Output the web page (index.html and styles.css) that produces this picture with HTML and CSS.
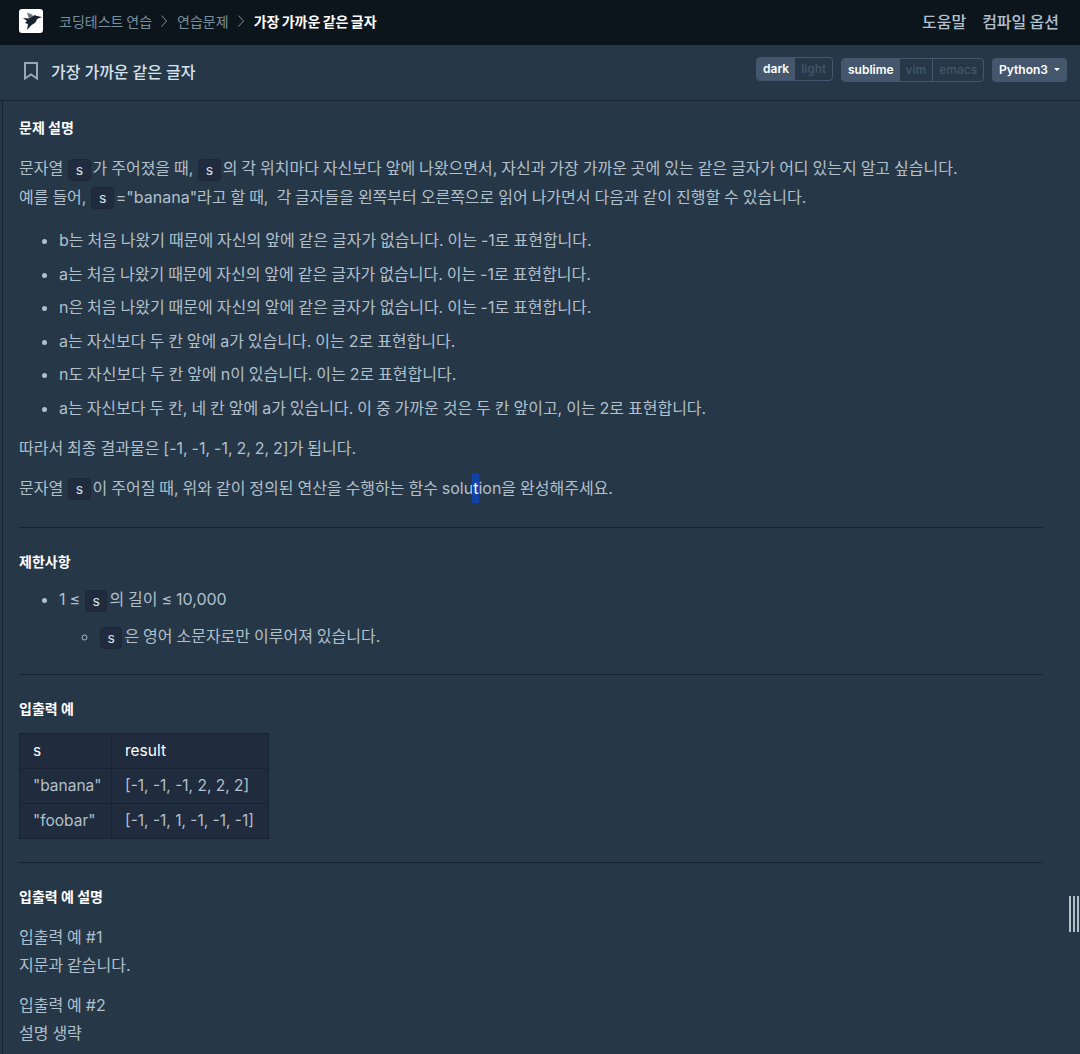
FILE: index.html
```html
<!DOCTYPE html>
<html lang="ko">
<head>
<meta charset="utf-8">
<title>가장 가까운 같은 글자</title>
<link rel="stylesheet" href="styles.css">
</head>
<body>
<nav class="nav">
  <div class="crumbs">
    <span class="logo">
      <svg viewBox="0 0 24 24" width="24" height="24"><path d="M8 3.5 L13 5.5 L15 8.5 L10 10 Z" fill="#6d7680"/><path d="M4 9 L10 9.5 L13 8 L15.5 6 L18 7 L23 8 L18 10 C17.5 13 15 15 12.5 16 L8 21 L9 15 L6 14 L8 12 Z" fill="#17232f"/></svg>
    </span>
    <a class="crumb">코딩테스트 연습</a>
    <svg class="chev" viewBox="0 0 6 12" width="6" height="12"><path d="M0.5 0.5 L5.5 6 L0.5 11.5" fill="none" stroke="#78909c" stroke-width="1"/></svg>
    <a class="crumb">연습문제</a>
    <svg class="chev" viewBox="0 0 6 12" width="6" height="12"><path d="M0.5 0.5 L5.5 6 L0.5 11.5" fill="none" stroke="#78909c" stroke-width="1"/></svg>
    <strong class="crumb-now">가장 가까운 같은 글자</strong>
  </div>
  <div class="nav-links">
    <a>도움말</a>
    <a>컴파일 옵션</a>
  </div>
</nav>
<header class="bar">
  <div class="bar-title">
    <svg viewBox="0 0 14 18" width="14" height="18"><path d="M1 1 H13 V16.5 L7 12.5 L1 16.5 Z" fill="none" stroke="#98a8b9" stroke-width="2"/></svg>
    <h1>가장 가까운 같은 글자</h1>
  </div>
  <div class="bar-tools">
    <div class="seg"><span class="on">dark</span><span class="off">light</span></div>
    <div class="seg seg-low"><span class="on">sublime</span><span class="off">vim</span><span class="off">emacs</span></div>
    <div class="lang">Python3<i class="caret"></i></div>
  </div>
</header>
<main class="guide">
  <h2 class="first">문제 설명</h2>
  <p>문자열 <code>s</code>가 주어졌을 때, <code>s</code>의 각 위치마다 자신보다 앞에 나왔으면서, 자신과 가장 가까운 곳에 있는 같은 글자가 어디 있는지 알고 싶습니다.<br>예를 들어, <code>s</code>="banana"라고 할 때,&nbsp; 각 글자들을 왼쪽부터 오른쪽으로 읽어 나가면서 다음과 같이 진행할 수 있습니다.</p>
  <ul class="steps">
    <li>b는 처음 나왔기 때문에 자신의 앞에 같은 글자가 없습니다. 이는 -1로 표현합니다.</li>
    <li>a는 처음 나왔기 때문에 자신의 앞에 같은 글자가 없습니다. 이는 -1로 표현합니다.</li>
    <li>n은 처음 나왔기 때문에 자신의 앞에 같은 글자가 없습니다. 이는 -1로 표현합니다.</li>
    <li>a는 자신보다 두 칸 앞에 a가 있습니다. 이는 2로 표현합니다.</li>
    <li>n도 자신보다 두 칸 앞에 n이 있습니다. 이는 2로 표현합니다.</li>
    <li>a는 자신보다 두 칸, 네 칸 앞에 a가 있습니다. 이 중 가까운 것은 두 칸 앞이고, 이는 2로 표현합니다.</li>
  </ul>
  <p>따라서 최종 결과물은 [-1, -1, -1, 2, 2, 2]가 됩니다.</p>
  <p class="last">문자열 <code>s</code>이 주어질 때, 위와 같이 정의된 연산을 수행하는 함수 solu<span class="sel">t</span>ion을 완성해주세요.</p>
  <hr>
  <h2>제한사항</h2>
  <ul class="limits">
    <li>1 ≤ <code>s</code>의 길이 ≤ 10,000
      <ul><li><code>s</code>은 영어 소문자로만 이루어져 있습니다.</li></ul>
    </li>
  </ul>
  <hr>
  <h2>입출력 예</h2>
  <table>
    <thead><tr><th>s</th><th>result</th></tr></thead>
    <tbody>
      <tr><td>"banana"</td><td>[-1, -1, -1, 2, 2, 2]</td></tr>
      <tr><td>"foobar"</td><td>[-1, -1, 1, -1, -1, -1]</td></tr>
    </tbody>
  </table>
  <hr>
  <h2>입출력 예 설명</h2>
  <p class="ex">입출력 예 #1<br>지문과 같습니다.</p>
  <p class="ex">입출력 예 #2<br>설명 생략</p>
  <div class="handle"><i></i><i></i><i></i></div>
</main>
</body>
</html>
```
FILE: styles.css
```css
* { box-sizing: border-box; }
html, body { margin: 0; height: 1054px; overflow: hidden; }
body {
  background: #263747;
  color: #b2c0cc;
  font-family: Inter, "Noto Sans CJK KR", sans-serif;
  font-size: 16px;
}
.nav {
  height: 45px;
  background: #0c151c;
  display: flex;
  align-items: center;
  justify-content: space-between;
  padding: 0 21px 3px 19px;
}
.crumbs { display: flex; align-items: center; font-size: 14px; word-spacing: -1px; }
.logo {
  width: 24px; height: 24px; background: #fff; border-radius: 3px;
  display: flex; align-items: center; justify-content: center;
  margin-right: 16px;
}
.crumb { color: #78909c; }
.chev { margin: 0 10px 0 9px; }
.crumb-now { color: #fff; font-weight: 700; }
.nav-links { display: flex; gap: 16px; color: #b2c0cc; font-weight: 500; font-size: 16px; word-spacing: -1px; }
.bar {
  height: 56px;
  display: flex;
  align-items: center;
  justify-content: space-between;
  padding: 0 13px 0 24px;
  border-bottom: 1px solid #172334;
}
.bar-title { display: flex; align-items: center; gap: 13px; margin-bottom: 3px; }
.bar-title h1 { margin: 0; font-size: 16px; font-weight: 500; color: #d7e2eb; word-spacing: -0.3px; }
.bar-tools { display: flex; align-items: center; gap: 8px; margin-bottom: 7px; }
.seg {
  display: flex; height: 24px; border: 1px solid #44576c; border-radius: 4px;
  font-size: 12px; font-weight: 500; line-height: 22px; overflow: hidden;
}
.seg-low { margin-top: 1px; }
.seg span { padding: 0 6px; }
.seg .on { background: #44576c; color: #fff; font-weight: 600; }
.seg .off { color: #44576c; }
.seg .off + .off { border-left: 1px solid #44576c; }
.lang {
  height: 24px; margin-top: 1px; padding: 0 7px; background: #44576c; border-radius: 4px;
  color: #fff; font-size: 12px; font-weight: 600; line-height: 24px;
  display: flex; align-items: center;
}
.caret {
  margin-left: 6px; width: 0; height: 0;
  border-left: 3px solid transparent; border-right: 3px solid transparent; border-top: 3px solid #fff;
}
.guide {
  height: 953px;
  margin-left: 2px;
  border-left: 1px solid #172334;
  padding: 15px 37px 0 16px;
  position: relative;
  line-height: 28.8px;
  word-spacing: -0.55px;
}
h2 { margin: 22px 0 14px; font-size: 14px; font-weight: 700; color: #fff; line-height: 24px; word-spacing: 0; }
h2.first { margin-top: 0; }
p { margin: 0 0 11.5px; }
p.last { margin-bottom: 24.5px; }
p.ex { line-height: 28px; margin-bottom: 12px; }
code {
  display: inline-block;
  font: inherit; font-size: 14px; line-height: 20px;
  padding: 0 6.5px; margin: 0 2px 0 1px;
  background: #202b3d; border: 1px solid #1c2838; border-radius: 4px; color: #d7e2eb;
  vertical-align: middle;
}
ul { margin: 0 0 10.5px; padding-left: 40px; list-style: disc; }
li { padding: 2.35px 0; }
.steps { margin: 12.5px 0 8.5px 0; }
.limits { margin-top: -7px; }
.limits li { padding: 4px 0; }
.limits ul { margin: 4px 0 0; list-style: circle; }
.limits ul li { padding-bottom: 0; }
.limits + hr { margin-top: 19px; }
.sel { display: inline-block; background: #1142a8; color: #fff; padding: 0 1px; margin: 0 -1px; }
hr { border: 0; border-top: 1px solid #172334; margin: 22px 0; }
table { border-collapse: collapse; background: #202b3d; margin: -2px 0 23px; table-layout: fixed; width: 250px; word-spacing: 0; }
th, td { border: 1px solid #172334; padding: 3px 8px 3px 13px; font-size: 15.5px; line-height: 28px; text-align: left; font-weight: 400; white-space: nowrap; }
th:first-child { width: 92px; }
th { color: #fff; }
.handle {
  position: absolute; right: 0; top: 795px; display: flex; gap: 2px; height: 36px; width: 11px;
}
.handle i { width: 2px; background: #b2c0cc; }
```
